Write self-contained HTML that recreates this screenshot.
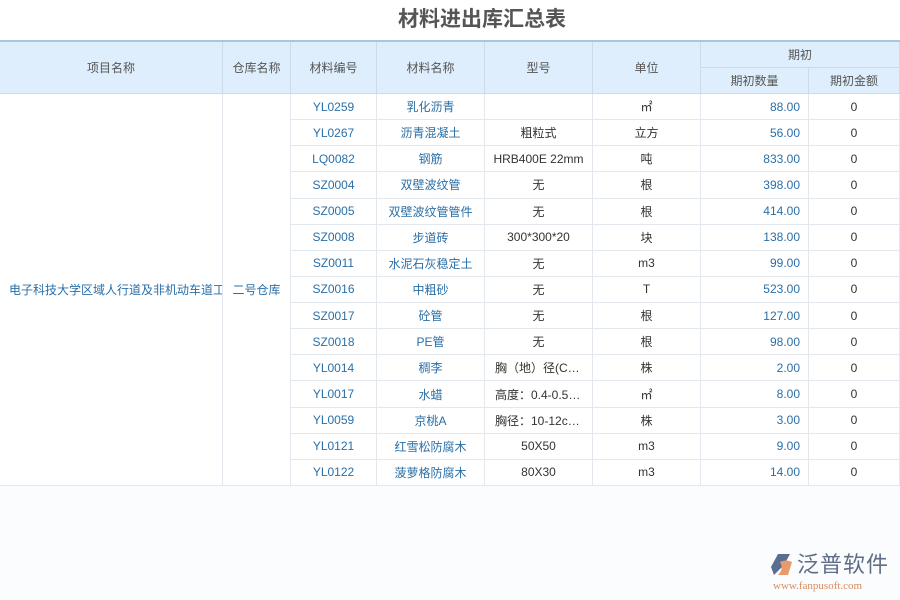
<!DOCTYPE html>
<html><head><meta charset="utf-8"><style>
*{margin:0;padding:0;box-sizing:border-box}
body{width:900px;height:600px;background:#fbfcfe;position:relative;overflow:hidden;font-family:"Liberation Sans","Noto Sans CJK SC",sans-serif;font-size:12px;color:#333}
.t{position:absolute;left:398px;top:0;width:200px;height:41px;font-size:21px;font-weight:bold;color:#555;line-height:40px;white-space:nowrap}
.c{position:absolute;display:flex;align-items:center;justify-content:center;white-space:nowrap;overflow:hidden}
.h{background:#deeefc;color:#555;border-right:1px solid #c8dcec;border-bottom:1px solid #c8dcec;font-size:12px}
.d{background:#fff;border-right:1px solid #e3e8ee;border-bottom:1px solid #e3e8ee}
.b{color:#2a6fa8}
.r{justify-content:flex-end;padding-right:8px}
.l{justify-content:flex-start;padding-left:10px}
</style></head><body>
<div style="position:absolute;left:0;top:0;width:900px;height:41px;background:#fff"></div>
<div class="t">材料进出库汇总表</div>
<div style="position:absolute;left:0;top:40px;width:900px;height:2px;background:#a9c6dd"></div>
<div class="c h" style="left:0;top:42px;width:223px;height:52px">项目名称</div>
<div class="c h" style="left:223px;top:42px;width:68px;height:52px">仓库名称</div>
<div class="c h" style="left:291px;top:42px;width:86px;height:52px">材料编号</div>
<div class="c h" style="left:377px;top:42px;width:108px;height:52px">材料名称</div>
<div class="c h" style="left:485px;top:42px;width:108px;height:52px">型号</div>
<div class="c h" style="left:593px;top:42px;width:108px;height:52px">单位</div>
<div class="c h" style="left:701px;top:42px;width:199px;height:26px">期初</div>
<div class="c h" style="left:701px;top:68px;width:108px;height:26px">期初数量</div>
<div class="c h" style="left:809px;top:68px;width:91px;height:26px">期初金额</div>
<div class="c d b l" style="left:0;top:94px;width:223px;height:392px;padding-left:9px">电子科技大学区域人行道及非机动车道工程</div>
<div class="c d b" style="left:223px;top:94px;width:68px;height:392px">二号仓库</div>
<div id="rows"></div>
<div style="position:absolute;left:770px;top:553px;width:24px;height:24px">
<svg width="24" height="24" viewBox="0 0 24 24"><path d="M8 1 L20 1 L14 12 L4 22 L1 14 Z" fill="#5a6f8f"/><path d="M10 9 Q16 6 22 9 L18 22 L8 22 Q14 16 10 9Z" fill="#e89a6a"/></svg></div>
<div style="position:absolute;left:797px;top:552px;font-size:22px;color:#5f6e86;letter-spacing:1px;line-height:26px">泛普软件</div>
<div style="position:absolute;left:773px;top:580px;font-family:'Liberation Serif',serif;font-size:11px;color:#d98b5a;line-height:12px">www.fanpusoft.com</div>
<script>
var d=[["YL0259","乳化沥青","","㎡","88.00"],["YL0267","沥青混凝土","粗粒式","立方","56.00"],["LQ0082","钢筋","HRB400E 22mm","吨","833.00"],["SZ0004","双壁波纹管","无","根","398.00"],["SZ0005","双壁波纹管管件","无","根","414.00"],["SZ0008","步道砖","300*300*20","块","138.00"],["SZ0011","水泥石灰稳定土","无","m3","99.00"],["SZ0016","中粗砂","无","T","523.00"],["SZ0017","砼管","无","根","127.00"],["SZ0018","PE管","无","根","98.00"],["YL0014","稠李","胸（地）径(C…","株","2.00"],["YL0017","水蜡","高度：0.4-0.5…","㎡","8.00"],["YL0059","京桃A","胸径：10-12c…","株","3.00"],["YL0121","红雪松防腐木","50X50","m3","9.00"],["YL0122","菠萝格防腐木","80X30","m3","14.00"]];
var h="",H=392/15;
d.forEach(function(r,i){var t=(94+i*H).toFixed(2),hh=H.toFixed(2);
var lft=r[2].indexOf("…")>=0?" l":"";
h+='<div class="c d b" style="left:291px;top:'+t+'px;width:86px;height:'+hh+'px">'+r[0]+'</div>'+
'<div class="c d b" style="left:377px;top:'+t+'px;width:108px;height:'+hh+'px">'+r[1]+'</div>'+
'<div class="c d'+lft+'" style="left:485px;top:'+t+'px;width:108px;height:'+hh+'px">'+r[2]+'</div>'+
'<div class="c d" style="left:593px;top:'+t+'px;width:108px;height:'+hh+'px">'+r[3]+'</div>'+
'<div class="c d b r" style="left:701px;top:'+t+'px;width:108px;height:'+hh+'px">'+r[4]+'</div>'+
'<div class="c d" style="left:809px;top:'+t+'px;width:91px;height:'+hh+'px">0</div>';});
document.getElementById("rows").innerHTML=h;
</script>
</body></html>
